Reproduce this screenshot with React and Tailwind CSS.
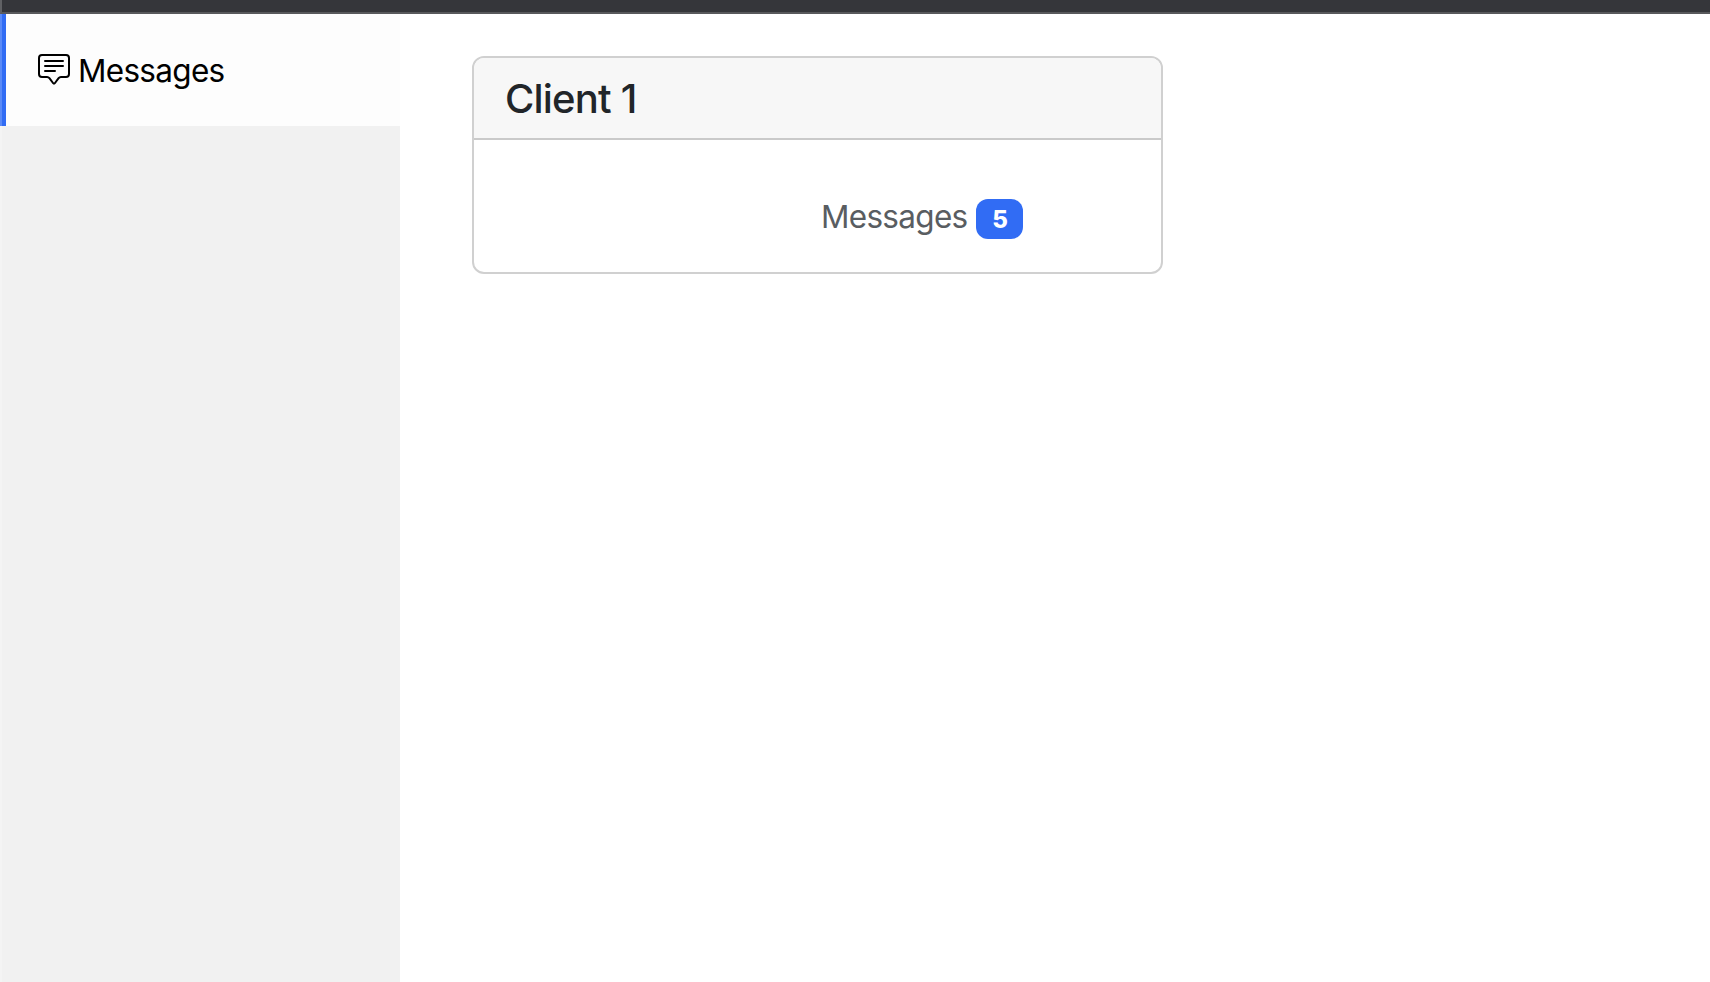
import { BsChatSquareText } from "react-icons/bs";

function TopBar() {
  return <header className="h-[14px] shrink-0 border-b-2 border-l-2 border-b-[#58595c] border-l-[#606164] bg-[#35363a]" />;
}

function Sidebar() {
  return (
    <nav className="flex w-[400px] shrink-0 flex-col bg-[#f1f1f1]">
      <a className="flex h-[112px] bg-[#fdfdfd] text-[31.5px] text-black">
        <span className="w-[2px] bg-[#5a8af7]" />
        <span className="w-[4px] bg-[#316cf4]" />
        <BsChatSquareText className="mt-[40px] ml-[32px] size-[32px]" />
        <span className="mt-[33px] ml-[8px] leading-[48px] tracking-[-0.7px]">Messages</span>
      </a>
      <div className="flex-1 border-l-2 border-[#f4f4f4]" />
    </nav>
  );
}

function ClientCard() {
  return (
    <section className="mt-[42px] ml-[72px] flex h-[218px] w-[691px] flex-col overflow-hidden rounded-[12px] border-2 border-[#d0d0d0] bg-white">
      <h5 className="h-[82px] shrink-0 border-b-2 border-[#cacaca] bg-[#f7f7f7] pt-[17px] pl-[31px] text-[40px] leading-[48px] font-medium tracking-[-0.8px] text-[#212529]">
        Client 1
      </h5>
      <div className="flex pt-[53px] pl-[347px]">
        <span className="w-[155px] text-[31.5px] leading-[48px] tracking-[-0.7px] text-[#595d61]">Messages</span>
        <span className="mt-[6px] flex h-[40px] w-[47px] items-center justify-center rounded-[12px] bg-[#316cf4] pt-px pl-px text-[24px] font-extrabold text-white">
          5
        </span>
      </div>
    </section>
  );
}

export default function App() {
  return (
    <div className="flex h-screen flex-col overflow-hidden bg-white font-['Inter',sans-serif]">
      <TopBar />
      <main className="flex flex-1">
        <Sidebar />
        <ClientCard />
      </main>
    </div>
  );
}
